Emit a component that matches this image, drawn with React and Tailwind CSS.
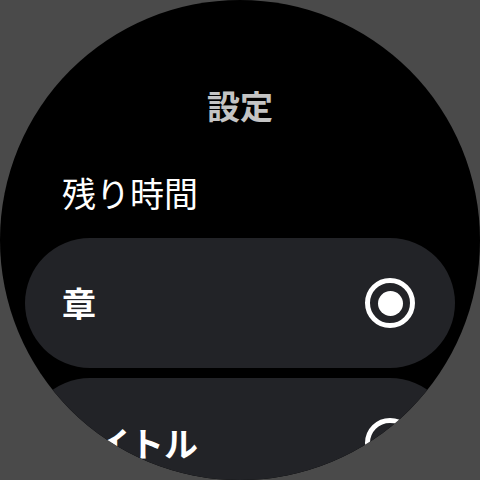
export default function App() {
  const font = { fontFamily: '"Noto Sans CJK JP", "Noto Sans", sans-serif' };
  return (
    <div className="w-[480px] h-[480px] bg-[#4a4a4a]" style={font}>
      <div className="w-[480px] h-[480px] rounded-full bg-black overflow-hidden flex flex-col">
        <div className="pt-[85px] h-[125px] text-center text-[33px] leading-[40px] font-bold text-[#c4c4c4]">設定</div>
        <div className="mt-[48px] h-[40px] pl-[62px] text-[34px] leading-[40px] text-white">残り時間</div>
        <div className="mt-[25px] mx-[25px] h-[130px] shrink-0 rounded-full bg-[#222327] flex items-center justify-between pl-[37px] pr-[40px]">
          <span className="text-[34px] leading-[40px] font-bold text-white">章</span>
          <div className="w-[50px] h-[50px] rounded-full border-[5px] border-white flex items-center justify-center">
            <div className="w-[25px] h-[25px] rounded-full bg-white" />
          </div>
        </div>
        <div className="mt-[10px] mx-[25px] h-[130px] shrink-0 rounded-full bg-[#222327] flex items-center justify-between pl-[37px] pr-[40px]">
          <span className="text-[34px] leading-[40px] font-bold text-white">タイトル</span>
          <div className="w-[50px] h-[50px] rounded-full border-[5px] border-white" />
        </div>
      </div>
    </div>
  );
}
